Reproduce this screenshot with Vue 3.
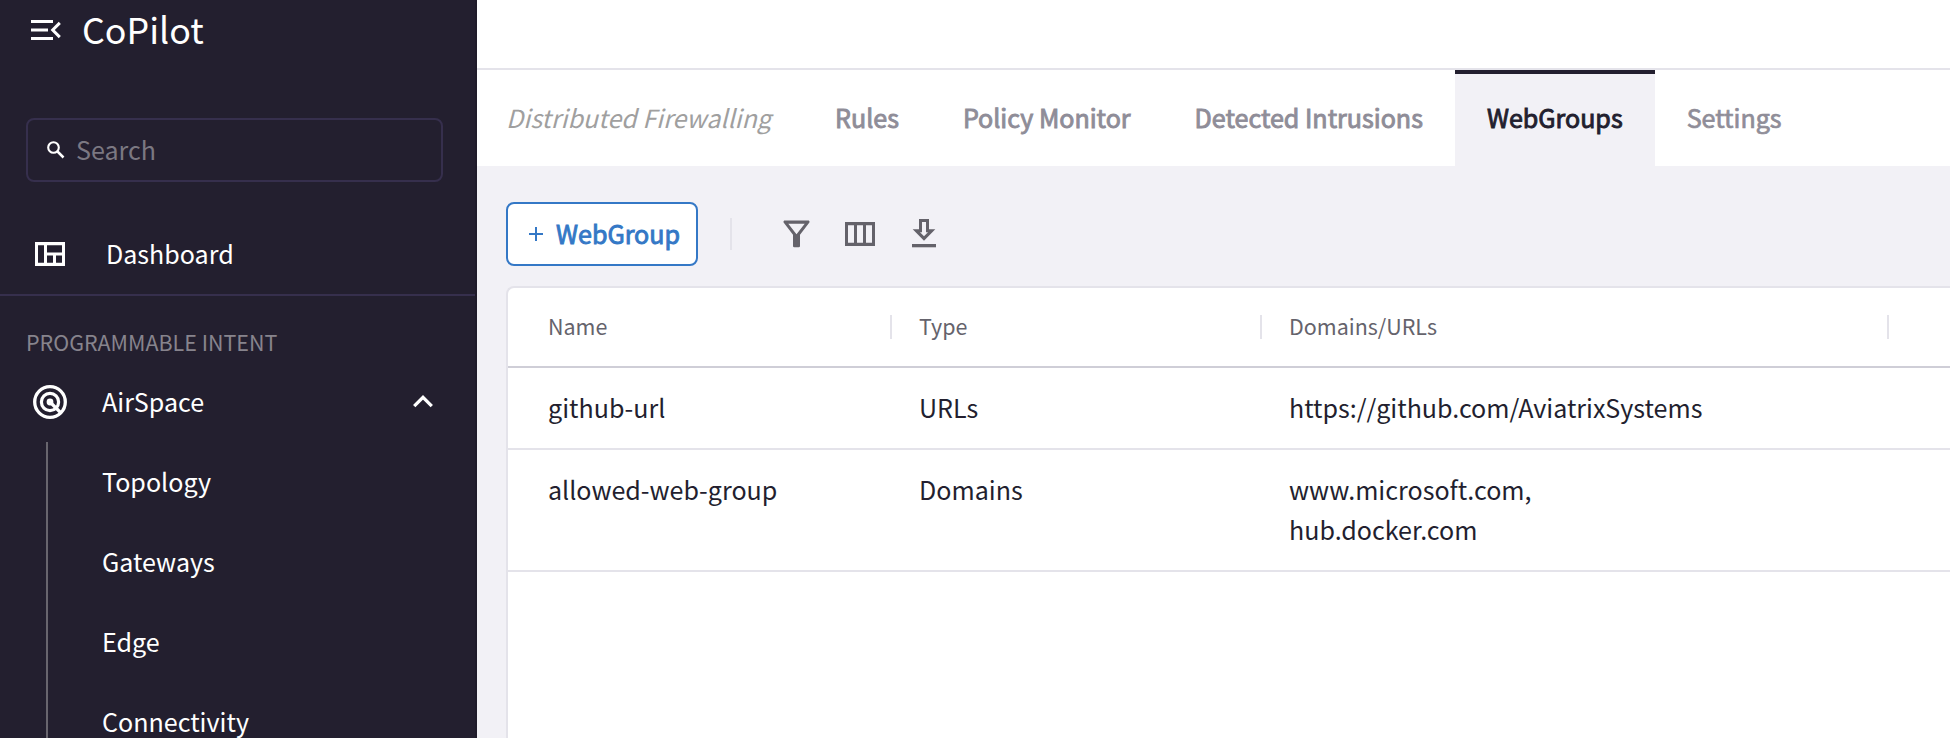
<script setup>
const navItems = ['Topology', 'Gateways', 'Edge', 'Connectivity']
const tabs = [
  { label: 'Rules' },
  { label: 'Policy Monitor' },
  { label: 'Detected Intrusions' },
  { label: 'WebGroups', active: true },
  { label: 'Settings', light: true },
]
const columns = ['Name', 'Type', 'Domains/URLs', '']
const rows = [
  { name: 'github-url', type: 'URLs', values: ['https://github.com/AviatrixSystems'] },
  { name: 'allowed-web-group', type: 'Domains', values: ['www.microsoft.com,', 'hub.docker.com'] },
]
</script>

<template>
  <div class="app">
    <aside class="sidebar">
      <header class="brand">
        <svg class="menu-icon" width="30" height="20" viewBox="0 0 30 20">
          <path d="M0 1.5h22M0 10h17M0 18.5h22" stroke="#fff" stroke-width="3" fill="none" />
          <path d="M28.8 2.9L21.7 10l7.1 7.1" stroke="#fff" stroke-width="3" fill="none" />
        </svg>
        <span class="brand-name">CoPilot</span>
      </header>
      <div class="search">
        <svg width="18" height="18" viewBox="0 0 18 18" fill="none" stroke="#fff">
          <circle cx="6.5" cy="6.5" r="5.3" stroke-width="2.1" />
          <path d="M10.5 10.5l6 6" stroke-width="2.5" />
        </svg>
        <span>Search</span>
      </div>
      <a class="dashboard">
        <svg width="30" height="24" viewBox="0 0 30 24">
          <path fill="#fff" fill-rule="evenodd" d="M0 0h30v24H0zM3 3.3v17.4h6V3.300zM12 3.300v7.200h15V3.300zM12 13.500v7.200h6v-7.200zM21 13.500v7.200h6v-7.200z" />
        </svg>
        <span>Dashboard</span>
      </a>
      <div class="section-title">PROGRAMMABLE INTENT</div>
      <a class="group">
        <svg width="34" height="34" viewBox="0 0 34 34" fill="none" stroke="#fff">
          <circle cx="17" cy="17" r="15.3" stroke-width="3.3" />
          <circle cx="17" cy="17" r="8.6" stroke-width="3.2" />
          <circle cx="17" cy="17" r="3.4" fill="#fff" stroke="none" />
          <path d="M17 17l11 11" stroke-width="3.2" />
        </svg>
        <span>AirSpace</span>
        <svg class="chevron" width="20" height="13" viewBox="0 0 20 13">
          <path d="M1.2 11.2L10 2.4l8.8 8.8" stroke="#fff" stroke-width="3.3" fill="none" />
        </svg>
      </a>
      <nav class="sub-nav">
        <a v-for="item in navItems" :key="item">{{ item }}</a>
      </nav>
    </aside>

    <main class="main">
      <div class="topbar"></div>
      <div class="tabs">
        <em class="page-title">Distributed Firewalling</em>
        <a v-for="tab in tabs" :key="tab.label" class="tab" :class="{ active: tab.active, light: tab.light }">{{ tab.label }}</a>
      </div>
      <div class="toolbar">
        <button class="add">
          <svg width="14" height="14" viewBox="0 0 14 14"><path d="M7 0v14M0 7h14" stroke="#3478c6" stroke-width="2" /></svg>
          <span>WebGroup</span>
        </button>
        <i class="divider"></i>
        <svg class="filter" width="27" height="28" viewBox="0 0 27 28">
          <path fill="#64626a" fill-rule="evenodd" d="M1.2 0.5H25.8Q27 1.4 26.4 2.600L17 14.800V26Q17 27.300 15.700 27.300H11.300Q10 27.300 10 26V14.800L.6 2.600Q0 1.400 1.200.5zM5.300 3.700L13.500 14.200 21.700 3.700z" />
        </svg>
        <svg class="columns" width="30" height="24" viewBox="0 0 30 24">
          <path fill="#64626a" fill-rule="evenodd" d="M0 0h30v24H0zM3 3.3v17.4h6V3.3zM12 3.3v17.4h6V3.3zM21 3.3v17.4h6V3.3z" />
        </svg>
        <svg class="download" width="24" height="29" viewBox="0 0 24 29">
          <path fill="#64626a" fill-rule="evenodd" d="M7 0h10v10.3h6.3L12 21.700.7 10.300H7zM10 3v10.300H8L12 17.300l4-4H14V3z" />
          <path fill="#64626a" d="M0 25h24v3.3H0z" />
        </svg>
      </div>
      <section class="table">
        <div class="row head">
          <div v-for="(column, i) in columns" :key="i" class="cell">{{ column }}</div>
        </div>
        <div v-for="row in rows" :key="row.name" class="row">
          <div class="cell">{{ row.name }}</div>
          <div class="cell">{{ row.type }}</div>
          <div class="cell">
            <div v-for="value in row.values" :key="value">{{ value }}</div>
          </div>
        </div>
      </section>
    </main>
  </div>
</template>

<style>
body { margin: 0; overflow: hidden; }
</style>

<style scoped>
* { box-sizing: border-box; }
.app {
  display: flex;
  width: 1950px;
  height: 738px;
  overflow: hidden;
  background: #f2f1f6;
  font-family: "Noto Sans CJK JP", "Noto Sans", sans-serif;
  font-size: 25.07px;
  line-height: 40px;
  color: #231f2f;
  white-space: nowrap;
}
svg { display: block; flex: none; }

.sidebar {
  flex: none;
  width: 477px;
  height: 738px;
  background: #231f2f;
  border-right: 2px solid #1f1b2a;
  color: #fff;
  overflow: hidden;
}
.brand { display: flex; height: 118px; padding-left: 31px; }
.menu-icon { margin-top: 20px; }
.brand-name { margin: 8px 0 0 21px; font-size: 35.8px; }
.search {
  display: flex;
  align-items: center;
  width: 417px;
  height: 64px;
  margin-left: 26px;
  padding-left: 19px;
  border: 2px solid #362f4d;
  border-radius: 8px;
  color: #7b7882;
}
.search span { margin: -2px 0 0 11px; }
.dashboard {
  display: flex;
  align-items: center;
  height: 114px;
  padding: 32px 0 0 35px;
  border-bottom: 2px solid #362f4d;
}
.dashboard span { margin: -2px 0 0 41px; }
.section-title {
  height: 66px;
  padding: 26px 0 0 26px;
  font-size: 21.48px;
  color: #87848d;
}
.group { display: flex; align-items: center; height: 80px; padding-left: 33px; }
.group span { margin: -2px 0 0 35px; }
.chevron { margin: -1px 42px 0 auto; }
.sub-nav { margin-left: 46px; border-left: 2px solid #68656e; height: 320px; }
.sub-nav a { display: block; height: 80px; padding: 19px 0 0 54px; }

.main { flex: 1; min-width: 0; display: flex; flex-direction: column; }
.topbar { height: 70px; flex: none; background: #fff; border-bottom: 2px solid #e4e3ea; }
.tabs { display: flex; height: 96px; flex: none; background: #fff; }
.page-title { width: 326px; padding: 27px 0 0 29px; color: #a09f9f; }
.tab { padding: 27px 32px 0; color: #8f8d98; -webkit-text-stroke: 0.9px currentColor; }
.tab.active { padding-top: 23px; border-top: 4px solid #231f2f; background: #f2f1f6; color: #231f2f; }
.tab.light { -webkit-text-stroke-width: 0.7px; }

.toolbar { display: flex; height: 120px; flex: none; padding: 36px 0 0 29px; }
.add {
  display: flex;
  align-items: center;
  width: 192px;
  height: 64px;
  padding: 0 0 0 21px;
  border: 2px solid #3478c6;
  border-radius: 8px;
  background: #fff;
  color: #3478c6;
  font: inherit;
  -webkit-text-stroke: 0.9px currentColor;
}
.add span { margin: -2px 0 0 13px; }
.divider { width: 2px; height: 32px; margin: 16px 0 0 32px; background: #e4e3ea; }
.filter { margin: 18px 0 0 50.5px; }
.columns { margin: 20px 0 0 35.5px; }
.download { margin: 17px 0 0 37px; }

.table {
  flex: 1;
  margin-left: 29px;
  border: 2px solid #e4e3ea;
  border-right: 0;
  border-bottom: 0;
  border-top-left-radius: 8px;
  background: #fff;
}
.row {
  display: grid;
  grid-template-columns: 384px 370px 627px 61px;
  padding: 19px 0 21px;
  border-bottom: 2px solid #e4e3ea;
}
.cell { padding-left: 27px; }
.cell:first-child { padding-left: 40px; }
.head { height: 80px; padding: 18px 0 0; border-color: #cfced7; font-size: 21.48px; color: #65636c; }
.head .cell { position: relative; height: 40px; }
.head .cell:not(:last-child)::after {
  content: "";
  position: absolute;
  right: 0;
  top: 9px;
  width: 2px;
  height: 24px;
  background: #e4e3ea;
}
</style>
